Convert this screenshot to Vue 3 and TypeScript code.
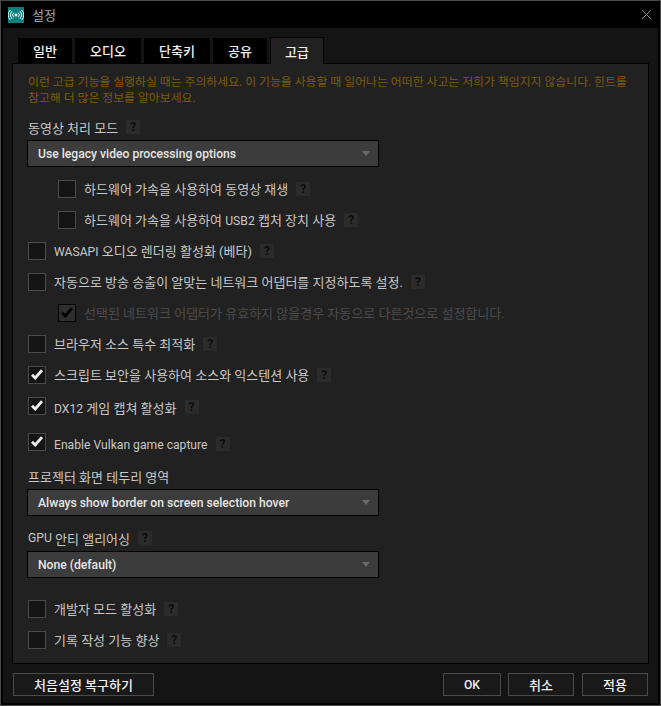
<template>
  <div class="window">
    <header class="titlebar">
      <span class="app-icon">
        <svg width="16" height="16" viewBox="0 0 16 16" fill="none" stroke="#dff1f0" stroke-width="1">
          <circle cx="8" cy="8" r="1.4" fill="#dff1f0" stroke="none" />
          <path d="M5.8 5.6a3.4 3.4 0 0 0 0 4.8M10.2 5.6a3.4 3.4 0 0 1 0 4.8M4 4.2a5.6 5.6 0 0 0 0 7.6M12 4.2a5.6 5.6 0 0 1 0 7.6M2.2 3a8 8 0 0 0 0 10M13.8 3a8 8 0 0 1 0 10" />
        </svg>
      </span>
      <span class="title">설정</span>
      <svg class="close" width="9" height="9" viewBox="0 0 9 9" stroke="#8a8a8a" stroke-width="1"><path d="M0 0l9 9M9 0L0 9" /></svg>
    </header>

    <main class="body">
      <nav class="tabs">
        <button v-for="t in tabs" :key="t.label" class="tab" :class="{ active: t.label === '고급' }" :style="{ width: t.width + 'px' }">{{ t.label }}</button>
      </nav>

      <section class="panel">
        <p class="warning">이런 고급 기능을 실행하실 때는 주의하세요. 이 기능을 사용할 때 일어나는 어떠한 사고는 저희가 책임지지 않습니다. 힌트를 참고해 더 많은 정보를 알아보세요.</p>

        <div class="label first">동영상 처리 모드 <span class="help">?</span></div>
        <div class="select"><span>Use legacy video processing options</span><i class="caret"></i></div>

        <div class="options">
          <div v-for="o in group1" :key="o.text" class="check" :class="[o.cls, { sub: o.sub, dim: o.dim }]">
            <span class="box" :class="{ on: o.on }">
              <svg v-if="o.on" width="12" height="11" viewBox="0 0 12 11" fill="none" :stroke="o.dim ? '#000' : '#eee'" stroke-width="2.8"><path d="M1 5.8l3.2 3.2L11 1.2" /></svg>
            </span>
            <span class="row-label">
              <span class="text"><template v-for="(r, i) in runs(o.text)" :key="i"><span v-if="r.latin" class="lat">{{ r.s }}</span><template v-else>{{ r.s }}</template></template></span>
              <span v-if="!o.dim" class="help">?</span>
            </span>
          </div>
        </div>

        <div class="label mid">프로젝터 화면 테두리 영역</div>
        <div class="select"><span>Always show border on screen selection hover</span><i class="caret"></i></div>

        <div class="label gpu"><span class="lat">GPU</span>&nbsp;안티 앨리어싱 <span class="help">?</span></div>
        <div class="select"><span>None (default)</span><i class="caret"></i></div>

        <div class="bottom-checks">
          <div v-for="o in group2" :key="o" class="check">
            <span class="box"></span>
            <span class="row-label">
              <span class="text">{{ o }}</span>
              <span class="help">?</span>
            </span>
          </div>
        </div>
      </section>

      <footer class="actions">
        <button class="btn reset">처음설정 복구하기</button>
        <button class="btn ok"><span class="lat">OK</span></button>
        <button class="btn cancel">취소</button>
        <button class="btn apply">적용</button>
      </footer>
    </main>
  </div>
</template>

<script setup lang="ts">
interface Option {
  text: string
  on?: boolean
  sub?: boolean
  dim?: boolean
  cls?: string
}

const tabs = [
  { label: '일반', width: 54 },
  { label: '오디오', width: 66 },
  { label: '단축키', width: 66 },
  { label: '공유', width: 54 },
  { label: '고급', width: 54 },
]

const group1: Option[] = [
  { text: '하드웨어 가속을 사용하여 동영상 재생', sub: true },
  { text: '하드웨어 가속을 사용하여 USB2 캡처 장치 사용', sub: true },
  { text: 'WASAPI 오디오 렌더링 활성화 (베타)' },
  { text: '자동으로 방송 송출이 알맞는 네트워크 어댑터를 지정하도록 설정.' },
  { text: '선택된 네트워크 어댑터가 유효하지 않을경우 자동으로 다른것으로 설정합니다.', sub: true, on: true, dim: true },
  { text: '브라우저 소스 특수 최적화' },
  { text: '스크립트 보안을 사용하여 소스와 익스텐션 사용', on: true },
  { text: 'DX12 게임 캡쳐 활성화', on: true, cls: 'drop-a' },
  { text: 'Enable Vulkan game capture', on: true, cls: 'drop-b' },
]

const group2 = ['개발자 모드 활성화', '기록 작성 기능 향상']

// korean glyphs sit at 13px, latin runs at 12px
function runs(text: string) {
  return text.split(/([A-Za-z0-9]+(?: [A-Za-z0-9]+)*)/).filter(Boolean).map((s) => ({
    s,
    latin: /^[A-Za-z0-9]/.test(s),
  }))
}
</script>

<style scoped>
.window {
  width: 661px;
  height: 706px;
  box-sizing: border-box;
  border: 1px solid #4a4a4a;
  background: #000;
  display: flex;
  flex-direction: column;
  overflow: hidden;
  font-family: Roboto, "Noto Sans CJK KR", sans-serif;
  font-size: 13px;
  color: #d4d4d4;
}
.lat { font-size: 12.15px }
.titlebar {
  height: 27px;
  flex: none;
  background: #000;
  display: flex;
  align-items: center;
  padding: 0 9px 0 7px;
}
.app-icon {
  width: 16px;
  height: 16px;
  background: #0a7f7c;
  display: block;
  margin-right: 8px;
}
.app-icon svg { display: block }
.title { color: #a8a8a8; font-size: 13px }
.close { margin-left: auto }
.body {
  flex: 1;
  display: flex;
  flex-direction: column;
  padding: 0 9px;
  background: #141414;
  margin: 0 2px 2px;
}
.tabs {
  display: flex;
  gap: 3px;
  padding: 10px 0 0 6px;
  height: 25px;
}
.tab {
  height: 25px;
  box-sizing: border-box;
  background: #000;
  color: #f0f0f0;
  border: 0;
  padding: 0;
  font: inherit;
  font-weight: 500;
}
.tab.active {
  background: #212121;
  border: 1px solid #000;
  border-bottom: 0;
  height: 27px;
  margin-top: -1px;
  position: relative;
  z-index: 1;
}
.panel {
  height: 601px;
  box-sizing: border-box;
  background: #212121;
  border: 1px solid #000;
  padding: 10px 15px 0 15px;
  display: flex;
  flex-direction: column;
  align-items: flex-start;
}
.warning {
  margin: 0;
  color: #7d5a12;
  font-size: 11.86px;
  line-height: 16px;
  height: 32px;
}
.label {
  display: flex;
  align-items: center;
  color: #c8c8c8;
  height: 14px;
}
.label .help { margin-left: 8px }
.label.first { margin: 14px 0 6px }
.label.mid { margin: 12px 0 6px }
.label.gpu { margin: 15px 0 6px }
.select {
  width: 352px;
  height: 27px;
  flex: none;
  margin-left: -1px;
  box-sizing: border-box;
  background: #3c3c3c;
  border: 1px solid #000;
  display: flex;
  align-items: center;
  justify-content: space-between;
  padding: 0 8px 0 10px;
  color: #e6e6e6;
  font-size: 12.15px;
  font-weight: 500;
}
.caret {
  width: 0;
  height: 0;
  border-left: 4px solid transparent;
  border-right: 4px solid transparent;
  border-top: 5px solid #6a6a6a;
}
.options { margin-top: 6px }
.check {
  display: flex;
  align-items: center;
  height: 31px;
}
.check.sub { margin-left: 30px }
.check.drop-a .row-label { padding-top: 3px }
.check.drop-b { margin-top: 5px }
.check.drop-b .row-label { padding-top: 5px }
.box {
  width: 18px;
  height: 18px;
  box-sizing: border-box;
  background: #141414;
  border: 1px solid #4a4a4a;
  margin-right: 8px;
  flex: none;
  display: flex;
  align-items: center;
  justify-content: center;
}
.dim .box { background: #2e2e2e; border-color: #000 }
.dim .text { color: #4c4c4c }
.row-label { display: flex; align-items: center }
.text { color: #c8c8c8 }
.help {
  width: 14px;
  height: 14px;
  background: #2b2b2b;
  color: #0c0c0c;
  font-weight: 700;
  font-size: 12px;
  line-height: 14px;
  text-align: center;
  display: inline-block;
  margin-left: 8px;
}
.bottom-checks { margin-top: 15px }
.actions {
  display: flex;
  padding: 9px 1px 0 1px;
  height: 23px;
}
.btn {
  height: 23px;
  box-sizing: border-box;
  background: #191919;
  border: 1px solid #4a4a4a;
  color: #f0f0f0;
  font: inherit;
  font-weight: 500;
  padding: 0;
}
.reset { width: 141px; margin-right: auto }
.ok { width: 58px }
.cancel { width: 66px; margin-left: 7px }
.apply { width: 66px; margin-left: 8px }
</style>

<style>
html, body { margin: 0; background: #141414 }
</style>
